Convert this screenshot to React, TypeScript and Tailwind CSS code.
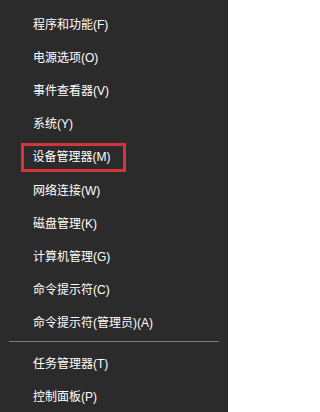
const top = [
  "程序和功能(F)",
  "电源选项(O)",
  "事件查看器(V)",
  "系统(Y)",
  "设备管理器(M)",
  "网络连接(W)",
  "磁盘管理(K)",
  "计算机管理(G)",
  "命令提示符(C)",
  "命令提示符(管理员)(A)",
];

const bottom = ["任务管理器(T)", "控制面板(P)"];

function Item({ label, boxed }: { label: string; boxed?: boolean }) {
  return (
    <div className="flex h-[33.1px] items-center pl-[21px]">
      <div
        className={
          boxed
            ? "flex h-[29px] w-[105px] items-center border-[3px] border-[#d4343c] pl-[8.5px]"
            : "flex h-[29px] items-center pl-[12px]"
        }
      >
        <span className="whitespace-nowrap text-[12px] leading-none text-white">{label}</span>
      </div>
    </div>
  );
}

export default function App() {
  return (
    <main
      className="h-[412px] w-[228px] overflow-hidden bg-[#2b2b2b] pt-[8.5px]"
      style={{ fontFamily: '"Liberation Sans", "Noto Sans CJK SC", sans-serif' }}
    >
      {top.map((t) => (
        <Item key={t} label={t} boxed={t.startsWith("设备")} />
      ))}
      <div className="mx-[9px] mt-[1.5px] mb-[5.3px] h-px bg-[#7d7d7d]" />
      {bottom.map((t) => (
        <Item key={t} label={t} />
      ))}
    </main>
  );
}
